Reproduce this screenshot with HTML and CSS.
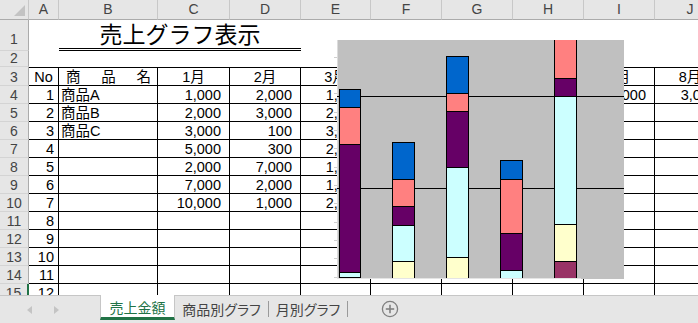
FILE: index.html
```html
<!DOCTYPE html>
<html lang="ja">
<head>
<meta charset="utf-8">
<title>売上グラフ表示</title>
<link rel="stylesheet" href="styles.css">
</head>
<body>
<div class="app">
  <div class="sheet">
    <div class="grid">
      <div class="corner"><span class="tri"></span></div>
      <div class="ch">A</div><div class="ch">B</div><div class="ch">C</div><div class="ch">D</div><div class="ch">E</div><div class="ch">F</div><div class="ch">G</div><div class="ch">H</div><div class="ch">I</div><div class="ch">J</div>

      <div class="rh r1">1</div><div class="c"></div><div class="c title">売上グラフ表示</div><div class="c"></div><div class="c"></div><div class="c"></div><div class="c"></div><div class="c"></div><div class="c"></div>

      <div class="rh">2</div><div class="c"></div><div class="c"></div><div class="c"></div><div class="c"></div><div class="c"></div><div class="c"></div><div class="c"></div><div class="c"></div><div class="c"></div><div class="c"></div>

      <div class="rh">3</div><div class="t top ctr">No</div><div class="t top dist"><span>商</span><span>品</span><span>名</span></div><div class="t top ctr">1月</div><div class="t top ctr">2月</div><div class="t top ctr">3月</div><div class="t top ctr">4月</div><div class="t top ctr">5月</div><div class="t top ctr">6月</div><div class="t top ctr">7月</div><div class="t top ctr">8月</div>

      <div class="rh">4</div><div class="t no">1</div><div class="t txt">商品A</div><div class="t num">1,000</div><div class="t num">2,000</div><div class="t num">1,000</div><div class="t num">2,000</div><div class="t num">3,000</div><div class="t num">1,000</div><div class="t num">1,000</div><div class="t num">3,000</div>

      <div class="rh">5</div><div class="t no">2</div><div class="t txt">商品B</div><div class="t num">2,000</div><div class="t num">3,000</div><div class="t num">2,000</div><div class="t"></div><div class="t"></div><div class="t"></div><div class="t"></div><div class="t"></div>

      <div class="rh">6</div><div class="t no">3</div><div class="t txt">商品C</div><div class="t num">3,000</div><div class="t num">100</div><div class="t num">3,000</div><div class="t"></div><div class="t"></div><div class="t"></div><div class="t"></div><div class="t"></div>

      <div class="rh">7</div><div class="t no">4</div><div class="t"></div><div class="t num">5,000</div><div class="t num">300</div><div class="t num">2,000</div><div class="t"></div><div class="t"></div><div class="t"></div><div class="t"></div><div class="t"></div>

      <div class="rh">8</div><div class="t no">5</div><div class="t"></div><div class="t num">2,000</div><div class="t num">7,000</div><div class="t num">1,000</div><div class="t"></div><div class="t"></div><div class="t"></div><div class="t"></div><div class="t"></div>

      <div class="rh">9</div><div class="t no">6</div><div class="t"></div><div class="t num">7,000</div><div class="t num">2,000</div><div class="t num">1,000</div><div class="t"></div><div class="t"></div><div class="t"></div><div class="t"></div><div class="t"></div>

      <div class="rh">10</div><div class="t no">7</div><div class="t"></div><div class="t num">10,000</div><div class="t num">1,000</div><div class="t num">2,000</div><div class="t"></div><div class="t"></div><div class="t"></div><div class="t"></div><div class="t"></div>

      <div class="rh">11</div><div class="t no">8</div><div class="t"></div><div class="t"></div><div class="t"></div><div class="t"></div><div class="t"></div><div class="t"></div><div class="t"></div><div class="t"></div><div class="t"></div>

      <div class="rh">12</div><div class="t no">9</div><div class="t"></div><div class="t"></div><div class="t"></div><div class="t"></div><div class="t"></div><div class="t"></div><div class="t"></div><div class="t"></div><div class="t"></div>

      <div class="rh">13</div><div class="t no">10</div><div class="t"></div><div class="t"></div><div class="t"></div><div class="t"></div><div class="t"></div><div class="t"></div><div class="t"></div><div class="t"></div><div class="t"></div>

      <div class="rh">14</div><div class="t no">11</div><div class="t"></div><div class="t"></div><div class="t"></div><div class="t"></div><div class="t"></div><div class="t"></div><div class="t"></div><div class="t"></div><div class="t"></div>

      <div class="rh sel">15</div><div class="t no">12</div><div class="t"></div><div class="t"></div><div class="t"></div><div class="t"></div><div class="t"></div><div class="t"></div><div class="t"></div><div class="t"></div><div class="t"></div>
    </div>

    <div class="chart">
      <svg width="287" height="239" viewBox="0 0 287 239" overflow="visible">
        <g stroke="#cfcfcf">
          <line x1="-3" y1="17.5" x2="0" y2="17.5"/>
          <line x1="-3" y1="35.5" x2="0" y2="35.5"/>
          <line x1="-3" y1="53.5" x2="0" y2="53.5"/>
          <line x1="-3" y1="72.5" x2="0" y2="72.5"/>
          <line x1="-3" y1="90.5" x2="0" y2="90.5"/>
          <line x1="-3" y1="108.5" x2="0" y2="108.5"/>
          <line x1="-3" y1="127.5" x2="0" y2="127.5"/>
          <line x1="-3" y1="145.5" x2="0" y2="145.5"/>
          <line x1="-3" y1="163.5" x2="0" y2="163.5"/>
          <line x1="-3" y1="182.5" x2="0" y2="182.5"/>
          <line x1="-3" y1="200.5" x2="0" y2="200.5"/>
          <line x1="-3" y1="218.5" x2="0" y2="218.5"/>
          <line x1="-3" y1="237.5" x2="0" y2="237.5"/>
        </g>
        <svg x="0" y="0" width="287" height="239" viewBox="0 0 287 239">
          <line x1="0.5" y1="0" x2="0.5" y2="239" stroke="#dcdcdc"/>
          <line x1="0" y1="56.5" x2="287" y2="56.5" stroke="#000"/>
          <line x1="0" y1="148.5" x2="287" y2="148.5" stroke="#000"/>
          <g stroke="#000" stroke-width="1">
            <rect x="2.5" y="49.5" width="21" height="18" fill="#0066cc"/>
            <rect x="2.5" y="67.5" width="21" height="37" fill="#ff8080"/>
            <rect x="2.5" y="104.5" width="21" height="128" fill="#660066"/>
            <rect x="2.5" y="232.5" width="21" height="5" fill="#ccffff"/>
            <rect x="2.5" y="237.5" width="21" height="5" fill="#ffffcc"/>

            <rect x="55.5" y="102.5" width="22" height="37" fill="#0066cc"/>
            <rect x="55.5" y="139.5" width="22" height="27" fill="#ff8080"/>
            <rect x="55.5" y="166.5" width="22" height="19" fill="#660066"/>
            <rect x="55.5" y="185.5" width="22" height="36" fill="#ccffff"/>
            <rect x="55.5" y="221.5" width="22" height="22" fill="#ffffcc"/>

            <rect x="109.5" y="16.5" width="22" height="37" fill="#0066cc"/>
            <rect x="109.5" y="53.5" width="22" height="18" fill="#ff8080"/>
            <rect x="109.5" y="71.5" width="22" height="56" fill="#660066"/>
            <rect x="109.5" y="127.5" width="22" height="90" fill="#ccffff"/>
            <rect x="109.5" y="217.5" width="22" height="25" fill="#ffffcc"/>

            <rect x="163.5" y="120.5" width="22" height="19" fill="#0066cc"/>
            <rect x="163.5" y="139.5" width="22" height="54" fill="#ff8080"/>
            <rect x="163.5" y="193.5" width="22" height="37" fill="#660066"/>
            <rect x="163.5" y="230.5" width="22" height="12" fill="#ccffff"/>

            <rect x="217.5" y="-10" width="22" height="48.5" fill="#ff8080"/>
            <rect x="217.5" y="38.5" width="22" height="18" fill="#660066"/>
            <rect x="217.5" y="56.5" width="22" height="128" fill="#ccffff"/>
            <rect x="217.5" y="184.5" width="22" height="37" fill="#ffffcc"/>
            <rect x="217.5" y="221.5" width="22" height="22" fill="#993366"/>
          </g>
          <line x1="0" y1="238.5" x2="244" y2="238.5" stroke="#e4e4e4"/>
        </svg>
      </svg>
    </div>
  </div>

  <div class="tabbar">
    <div class="nav">
      <svg width="6" height="8" viewBox="0 0 6 8"><polygon points="5,0 5,8 0,4" fill="#c4c4c4"/></svg>
      <svg width="6" height="8" viewBox="0 0 6 8"><polygon points="0,0 0,8 5,4" fill="#c4c4c4"/></svg>
    </div>
    <div class="tab active">売上金額</div>
    <div class="tab t2">商品別グラフ</div>
    <div class="sep"></div>
    <div class="tab t3">月別グラフ</div>
    <div class="sep"></div>
    <div class="add">
      <svg width="18" height="18" viewBox="0 0 18 18">
        <circle cx="9" cy="9" r="7.6" fill="none" stroke="#808080" stroke-width="1.3"/>
        <line x1="9" y1="4.8" x2="9" y2="13.2" stroke="#808080" stroke-width="1.6"/>
        <line x1="4.8" y1="9" x2="13.2" y2="9" stroke="#808080" stroke-width="1.6"/>
      </svg>
    </div>
  </div>
</div>
</body>
</html>
```
FILE: styles.css
```css
* {
  box-sizing: border-box;
  margin: 0;
  padding: 0;
}

html, body {
  width: 698px;
  height: 323px;
  overflow: hidden;
  background: #ffffff;
}

body {
  font-family: "Liberation Sans", "Noto Sans CJK JP", sans-serif;
  color: #000;
}

.app {
  display: flex;
  flex-direction: column;
  height: 323px;
}

.sheet {
  position: relative;
  height: 295px;
  flex: none;
  overflow: hidden;
}

.grid {
  display: grid;
  grid-template-columns: 29px 30px 99px 72px 71px 70px 71px 71px 71px 71px 71px;
  grid-template-rows: 20px 31px 16px 19px repeat(12, 18px);
  width: 726px;
}

/* headers */
.corner {
  position: relative;
  background: #e6e6e6;
  border-right: 1px solid #c8c8c8;
  border-bottom: 1px solid #ababab;
}

.corner .tri {
  position: absolute;
  right: 3px;
  bottom: 3px;
  width: 0;
  height: 0;
  border-left: 11px solid transparent;
  border-bottom: 11px solid #c3c3c3;
}

.ch {
  background: #e6e6e6;
  border-right: 1px solid #c8c8c8;
  border-bottom: 1px solid #ababab;
  font-size: 14px;
  color: #444;
  text-align: center;
  line-height: 17px;
  padding-top: 1px;
}

.rh {
  background: #e6e6e6;
  border-right: 1px solid #ababab;
  border-bottom: 1px solid #d4d4d4;
  font-size: 14px;
  line-height: 14px;
  color: #444;
  display: flex;
  align-items: flex-end;
  justify-content: center;
  padding-bottom: 1px;
}

.rh.r1 {
  padding-bottom: 4px;
}

.rh.sel {
  border-right: 2px solid #217346;
}

/* plain cells */
.c {
  background: #fff;
}

.title {
  grid-column: span 3;
  border-bottom: 3px double #000;
  font-family: "Noto Sans CJK JP", sans-serif;
  font-size: 23px;
  line-height: 23px;
  display: flex;
  align-items: flex-end;
  justify-content: center;
  padding-bottom: 3px;
}

/* table cells */
.t {
  border-right: 1px solid #000;
  border-bottom: 1px solid #000;
  font-size: 14.5px;
  line-height: 13px;
  display: flex;
  align-items: flex-end;
  white-space: nowrap;
  padding-bottom: 1px;
}

.t.top {
  border-top: 1px solid #000;
}

.ctr {
  justify-content: center;
}

.num {
  justify-content: flex-end;
  padding-right: 8px;
}

.no {
  justify-content: flex-end;
  padding-right: 4px;
}

.txt {
  padding-left: 2px;
}

.dist {
  justify-content: space-between;
  padding: 0 6px 1px 7px;
}

/* chart */
.chart {
  position: absolute;
  left: 337px;
  top: 40px;
  width: 287px;
  height: 239px;
  background: #c0c0c0;
}

.chart svg {
  display: block;
}

/* tab bar */
.tabbar {
  flex: none;
  height: 28px;
  background: #e6e6e6;
  border-top: 1px solid #c6c6c6;
  display: flex;
  align-items: flex-start;
  font-family: "Noto Sans CJK JP", sans-serif;
  font-size: 14px;
  font-feature-settings: "palt";
}

.nav {
  width: 100px;
  height: 27px;
  display: flex;
  align-items: center;
  gap: 21px;
  padding-left: 27px;
}

.tab {
  height: 24px;
  display: flex;
  align-items: center;
  justify-content: center;
  color: #444;
  padding-top: 1px;
}

.tab.active {
  width: 75px;
  height: 25px;
  margin-top: -1px;
  background: #fff;
  color: #217346;
  border-left: 1px solid #c6c6c6;
  border-right: 1px solid #c6c6c6;
  border-bottom: 3px solid #217346;
  padding-top: 2px;
}

.tab.t2 {
  width: 93px;
}

.tab.t3 {
  width: 78px;
}

.sep {
  width: 1px;
  height: 16px;
  margin-top: 5px;
  background: #9a9a9a;
}

.add {
  margin-left: 33px;
  margin-top: 4px;
  width: 18px;
  height: 18px;
}

.add svg {
  display: block;
}
```
